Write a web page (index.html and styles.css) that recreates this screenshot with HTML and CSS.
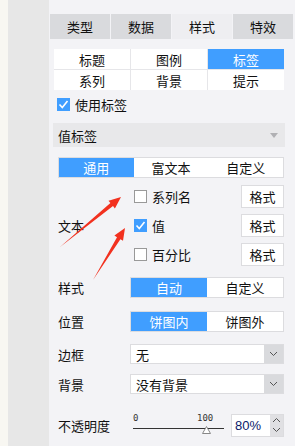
FILE: index.html
```html
<!DOCTYPE html>
<html lang="zh">
<head>
    <meta charset="UTF-8">
    <title>标签设置</title>
    <link rel="stylesheet" href="styles.css">
</head>
<body>
    <div class="strip-light"></div>
    <div class="strip-gray"></div>
    <div class="panel">
        <div class="tabs">
            <div class="tab">类型</div>
            <div class="tab">数据</div>
            <div class="tab active">样式</div>
            <div class="tab">特效</div>
        </div>

        <div class="subtabs">
            <div class="subtab">标题</div>
            <div class="subtab">图例</div>
            <div class="subtab active">标签</div>
            <div class="subtab">系列</div>
            <div class="subtab">背景</div>
            <div class="subtab">提示</div>
        </div>

        <div class="check-row main-check">
            <span class="box checked"></span>使用标签
        </div>

        <div class="section-head">
            值标签
            <span class="caret"></span>
        </div>

        <div class="content">
            <div class="modes">
                <div class="mode active">通用</div>
                <div class="mode">富文本</div>
                <div class="mode">自定义</div>
            </div>

            <div class="row text-row">
                <div class="label">文本</div>
                <div class="ctrl checks">
                    <div class="check-line">
                        <span class="check-row"><span class="box"></span>系列名</span>
                        <button class="fmt">格式</button>
                    </div>
                    <div class="check-line">
                        <span class="check-row"><span class="box checked"></span>值</span>
                        <button class="fmt">格式</button>
                    </div>
                    <div class="check-line">
                        <span class="check-row"><span class="box"></span>百分比</span>
                        <button class="fmt">格式</button>
                    </div>
                </div>
            </div>

            <div class="row style-row">
                <div class="label">样式</div>
                <div class="ctrl seg">
                    <div class="seg-item active">自动</div>
                    <div class="seg-item">自定义</div>
                </div>
            </div>

            <div class="row pos-row">
                <div class="label">位置</div>
                <div class="ctrl seg">
                    <div class="seg-item active">饼图内</div>
                    <div class="seg-item">饼图外</div>
                </div>
            </div>

            <div class="row border-row">
                <div class="label">边框</div>
                <div class="ctrl select">
                    <span class="sel-text">无</span>
                    <span class="sel-arrow"><svg width="9" height="6" viewBox="0 0 9 6"><path d="M1 1l3.5 3.5L8 1" fill="none" stroke="#555" stroke-width="1"/></svg></span>
                </div>
            </div>

            <div class="row bg-row">
                <div class="label">背景</div>
                <div class="ctrl select">
                    <span class="sel-text">没有背景</span>
                    <span class="sel-arrow"><svg width="9" height="6" viewBox="0 0 9 6"><path d="M1 1l3.5 3.5L8 1" fill="none" stroke="#555" stroke-width="1"/></svg></span>
                </div>
            </div>

            <div class="row opacity-row">
                <div class="label">不透明度</div>
                <div class="ctrl opacity">
                    <div class="slider">
                        <span class="tick-min">0</span>
                        <span class="tick-max">100</span>
                        <span class="track"></span>
                        <svg class="thumb" width="9" height="8" viewBox="0 0 9 8"><path d="M4.5 0.5L8.5 7.5H0.5Z" fill="#fff" stroke="#888"/></svg>
                    </div>
                    <div class="spin">
                        <span class="spin-val">80%</span>
                        <span class="spin-btns">
                            <svg width="9" height="6" viewBox="0 0 9 6"><path d="M1 5l3.5-3.5L8 5" fill="none" stroke="#555"/></svg>
                            <svg width="9" height="6" viewBox="0 0 9 6"><path d="M1 1l3.5 3.5L8 1" fill="none" stroke="#555"/></svg>
                        </span>
                    </div>
                </div>
            </div>
        </div>
    </div>

    <svg class="arrows" width="295" height="446" viewBox="0 0 295 446">
        <polygon points="60,247 110.4,203.1 108.5,200.7 121,197 114.9,208.5 113,206.1" fill="#f2311f"/>
        <polygon points="93,280 117,237.2 114.4,235.6 125,228 123,240.8 120.4,239.3" fill="#f2311f"/>
    </svg>
</body>
</html>
```

FILE: styles.css
```css
body {
    margin: 0;
    width: 295px;
    height: 446px;
    display: flex;
    font-family: "Noto Sans CJK SC", "Noto Sans", sans-serif;
    font-size: 13px;
    color: #111;
    overflow: hidden;
    position: relative;
}
.strip-light {
    width: 8px;
    background: #f8f7f2;
}
.strip-gray {
    width: 41px;
    background: #e7e7e7;
}
.panel {
    flex: 1;
    background: #f3f3f6;
}

/* top tabs */
.tabs {
    display: flex;
    gap: 1px;
    margin: 14px 0 0 1px;
    width: 243px;
    height: 25px;
}
.tab {
    flex: 1;
    background: #d9dadd;
    display: flex;
    align-items: center;
    justify-content: center;
}
.tab.active {
    background: #eeeef1;
}

/* sub tabs */
.subtabs {
    display: grid;
    grid-template-columns: 76px 76px 76px;
    grid-auto-rows: 20px;
    gap: 1px;
    background: #e6e6e9;
    margin: 10px 0 0 5px;
    width: 230px;
}
.subtab {
    background: #fff;
    display: flex;
    align-items: center;
    justify-content: center;
}
.subtab.active {
    background: #409eff;
    color: #fff;
}

/* checkbox */
.check-row {
    display: flex;
    align-items: center;
    gap: 5px;
}
.main-check {
    margin: 7px 0 0 8px;
    height: 14px;
}
.box {
    width: 11px;
    height: 11px;
    border: 1px solid #999;
    background: #fff;
    flex: none;
}
.box.checked {
    border-color: #409eff;
    background: #409eff url("data:image/svg+xml;utf8,<svg xmlns='http://www.w3.org/2000/svg' width='13' height='13'><path d='M2.5 6.5l2.8 3L10.5 3' fill='none' stroke='white' stroke-width='1.6'/></svg>") center no-repeat;
}

/* section header */
.section-head {
    margin: 12px 0 0 4px;
    width: 232px;
    height: 24px;
    background: #e8e8ea;
    display: flex;
    align-items: center;
    padding-left: 5px;
    box-sizing: border-box;
    position: relative;
}
.caret {
    position: absolute;
    right: 7px;
    top: 10px;
    border-left: 4px solid transparent;
    border-right: 4px solid transparent;
    border-top: 5px solid #b0b0b3;
}

.content {
    margin-left: 9px;
    width: 226px;
}
.modes {
    display: flex;
    margin-top: 10px;
    height: 21px;
    border: 1px solid #dcdcdf;
    background: #fff;
    box-sizing: border-box;
}
.mode {
    flex: 1;
    display: flex;
    align-items: center;
    justify-content: center;
}
.mode.active {
    background: #409eff;
    color: #fff;
}

.row {
    display: flex;
    align-items: center;
}
.label {
    width: 72px;
    flex: none;
}
.ctrl {
    width: 154px;
}
.text-row {
    margin-top: 7px;
}
.checks {
    display: flex;
    flex-direction: column;
    gap: 6px;
}
.check-line {
    display: flex;
    justify-content: space-between;
    align-items: center;
    padding-left: 4px;
    height: 23px;
}
.fmt {
    width: 43px;
    height: 23px;
    border: 1px solid #dcdcdf;
    background: #fff;
    font-family: inherit;
    font-size: 13px;
    color: #111;
    padding: 0;
}

.seg {
    display: flex;
    height: 21px;
    border: 1px solid #dcdcdf;
    background: #fff;
    box-sizing: border-box;
}
.seg-item {
    flex: 1;
    display: flex;
    align-items: center;
    justify-content: center;
}
.seg-item.active {
    background: #409eff;
    color: #fff;
}
.style-row {
    margin-top: 11px;
}
.pos-row {
    margin-top: 13px;
}

.select {
    display: flex;
    height: 20px;
    border: 1px solid #dcdcdf;
    background: #fff;
    box-sizing: border-box;
}
.sel-text {
    flex: 1;
    padding-left: 5px;
    display: flex;
    align-items: center;
}
.sel-arrow {
    width: 19px;
    background: #d9dadd;
    display: flex;
    align-items: center;
    justify-content: center;
}
.border-row {
    margin-top: 12px;
}
.bg-row {
    margin-top: 10px;
}

.opacity-row {
    margin-top: 19px;
}
.opacity {
    display: flex;
    align-items: center;
    justify-content: space-between;
}
.slider {
    position: relative;
    width: 91px;
    height: 24px;
    margin-left: 3px;
}
.tick-min, .tick-max {
    position: absolute;
    top: 0;
    font-family: "DejaVu Sans Mono", monospace;
    font-size: 9px;
    color: #333;
}
.tick-min {
    left: 0;
}
.tick-max {
    left: 64px;
}
.track {
    position: absolute;
    left: 0;
    right: 0;
    top: 15px;
    height: 1px;
    background: #333;
}
.thumb {
    position: absolute;
    left: 69px;
    top: 13px;
}
.spin {
    display: flex;
    height: 23px;
    width: 53px;
    border: 1px solid #dcdcdf;
    background: #fff;
    box-sizing: border-box;
}
.spin-val {
    flex: 1;
    display: flex;
    align-items: center;
    padding-left: 3px;
    font-family: "Liberation Sans", sans-serif;
    font-size: 13px;
    color: #0a1a6b;
}
.spin-btns {
    width: 13px;
    background: #e0e0e3;
    display: flex;
    flex-direction: column;
    align-items: center;
    justify-content: space-around;
}

.arrows {
    position: absolute;
    left: 0;
    top: 0;
    pointer-events: none;
}
```
